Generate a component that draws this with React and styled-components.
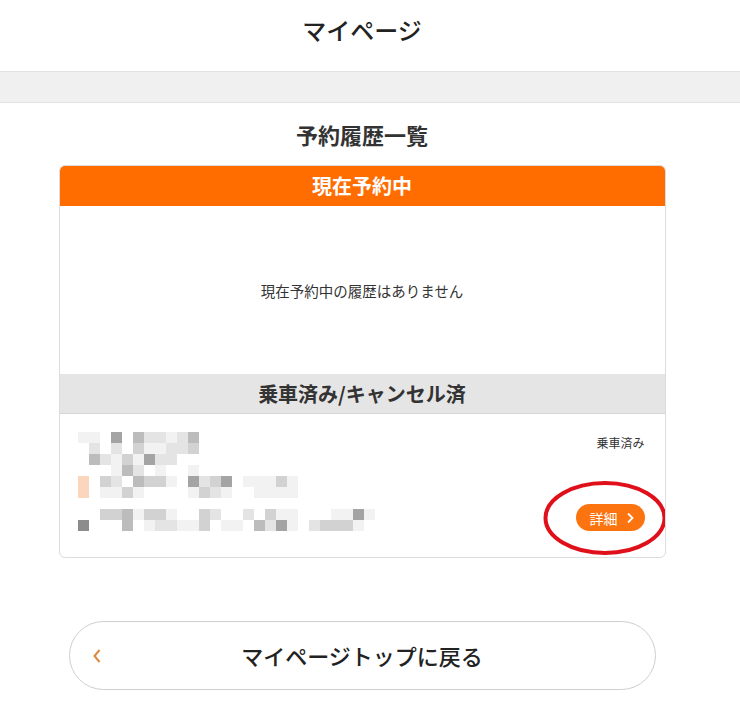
import styled, { createGlobalStyle } from 'styled-components';

const GlobalStyle = createGlobalStyle`
  html, body {
    margin: 0;
    padding: 0;
    background: #fff;
  }
  body {
    font-family: "Noto Sans CJK JP", "Noto Sans", sans-serif;
    color: #222;
  }
`;

const SHADES = {
  '.': 'transparent',
  o: '#fbd6bd',
  1: '#f2f2f2',
  2: '#e4e4e4',
  3: '#d2d2d2',
  4: '#bcbcbc',
  5: '#a4a4a4',
  6: '#8c8c8c',
};

// blurred (mosaic) reservation summary
const MOSAIC = [
  '11.5.422124',
  '.2.2.311223',
  '.42131522',
  '...142.1..1',
  'o.32.4331.5235.11131',
  'o.1131....1321..1111',
  '',
  '..3341331..32..2.311...1151',
  '6...4.122113.11.4251.23331',
];

const App = () => {
  return (
    <>
      <GlobalStyle />
      <Header>
        <HeaderTitle>マイページ</HeaderTitle>
      </Header>
      <Band />
      <Main>
        <SectionTitle>予約履歴一覧</SectionTitle>
        <Card>
          <CardHead variant="current">現在予約中</CardHead>
          <Empty>現在予約中の履歴はありません</Empty>
          <CardHead variant="past">乗車済み/キャンセル済</CardHead>
          <Item>
            <Mosaic>
              {MOSAIC.map((row, r) => (
                <MosaicRow key={r}>
                  {row.split('').map((c, i) => (
                    <Cell key={i} style={{ background: SHADES[c] }} />
                  ))}
                </MosaicRow>
              ))}
            </Mosaic>
            <ItemSide>
              <Status>乗車済み</Status>
              <DetailWrap>
                <DetailButton>
                  詳細
                  <svg width="9" height="12" viewBox="0 0 9 12">
                    <path d="M2 1.5 L6.5 6 L2 10.5" fill="none" stroke="#fff" strokeWidth="1.8" />
                  </svg>
                </DetailButton>
                <Ring width="124" height="76" viewBox="0 0 124 76">
                  <ellipse cx="62" cy="38" rx="59.5" ry="35" fill="none" stroke="#e0101a" strokeWidth="4" />
                </Ring>
              </DetailWrap>
            </ItemSide>
          </Item>
        </Card>
        <BackButton>
          <BackIcon width="10" height="16" viewBox="0 0 10 16">
            <path d="M7.5 2 L2.5 8 L7.5 14" fill="none" stroke="#dc8a3c" strokeWidth="2" />
          </BackIcon>
          マイページトップに戻る
        </BackButton>
      </Main>
    </>
  );
};

export default App;

const Header = styled.header`
  width: 724px;
  height: 71px;
  display: flex;
  justify-content: center;
  align-items: flex-start;
`;

const HeaderTitle = styled.h1`
  margin: 12px 0 0;
  font-size: 24px;
  font-weight: 500;
  line-height: 36px;
  color: #222;
`;

const Band = styled.div`
  height: 30px;
  background: #f0f0f0;
  border-top: 1px solid #e2e2e2;
  border-bottom: 1px solid #e2e2e2;
`;

const Main = styled.main`
  width: 724px;
  display: flex;
  flex-direction: column;
  align-items: center;
`;

const SectionTitle = styled.h2`
  margin: 16px 0 0;
  font-size: 22px;
  font-weight: 700;
  line-height: 30px;
  color: #333;
`;

const Card = styled.section`
  margin-top: 16px;
  width: 607px;
  box-sizing: border-box;
  border: 1px solid #dcdcdc;
  border-radius: 6px;
  overflow: hidden;
`;

const CardHead = styled.div`
  height: ${(p) => (p.variant === 'current' ? '41px' : '40px')};
  margin: ${(p) => (p.variant === 'current' ? '-1px -1px 0' : '0')};
  display: flex;
  align-items: center;
  justify-content: center;
  font-size: 20px;
  font-weight: 700;
  background: ${(p) => (p.variant === 'current' ? '#ff6c00' : '#e5e5e5')};
  color: ${(p) => (p.variant === 'current' ? '#fff' : '#333')};
  border-bottom: ${(p) => (p.variant === 'current' ? 'none' : '1px solid #d6d6d6')};
  box-sizing: border-box;
`;

const Empty = styled.p`
  margin: 0;
  height: 168px;
  display: flex;
  align-items: center;
  justify-content: center;
  font-size: 14.5px;
  color: #333;
`;

const Item = styled.div`
  height: 143px;
  box-sizing: border-box;
  padding: 18px 20px 0 18px;
  display: flex;
  justify-content: space-between;
`;

const Mosaic = styled.div`
  display: flex;
  flex-direction: column;
`;

const MosaicRow = styled.div`
  display: flex;
  height: 11px;
`;

const Cell = styled.span`
  width: 11px;
  height: 11px;
`;

const ItemSide = styled.div`
  display: flex;
  flex-direction: column;
  align-items: flex-end;
`;

const Status = styled.span`
  margin-top: 2px;
  font-size: 12px;
  line-height: 18px;
  color: #333;
`;

const DetailWrap = styled.div`
  position: relative;
  margin-top: 52px;
`;

const DetailButton = styled.button`
  width: 69px;
  height: 27px;
  border: none;
  border-radius: 14px;
  background: #fb7410;
  color: #fff;
  font-family: inherit;
  font-size: 14px;
  display: flex;
  align-items: center;
  justify-content: center;
  gap: 8px;
  padding: 0 0 0 4px;
`;

const Ring = styled.svg`
  position: absolute;
  left: -33px;
  top: -24px;
  pointer-events: none;
`;

const BackButton = styled.button`
  margin-top: 63px;
  width: 587px;
  height: 69px;
  border: 1px solid #cfcfcf;
  border-radius: 35px;
  background: #fff;
  position: relative;
  font-family: inherit;
  font-size: 22px;
  font-weight: 500;
  color: #222;
  display: flex;
  align-items: center;
  justify-content: center;
  padding-bottom: 3px;
`;

const BackIcon = styled.svg`
  position: absolute;
  left: 22px;
  top: 26px;
`;
